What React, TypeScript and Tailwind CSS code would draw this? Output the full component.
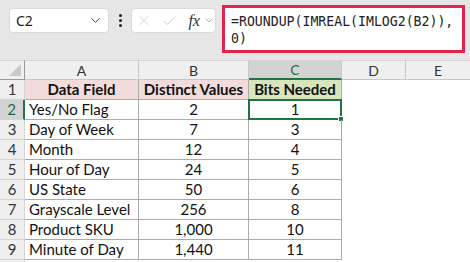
import { ChevronDown, X, Check } from "lucide-react";

const rows: [string, string, string][] = [
  ["Yes/No Flag", "2", "1"],
  ["Day of Week", "7", "3"],
  ["Month", "12", "4"],
  ["Hour of Day", "24", "5"],
  ["US State", "50", "6"],
  ["Grayscale Level", "256", "8"],
  ["Product SKU", "1,000", "10"],
  ["Minute of Day", "1,440", "11"],
];

const cell = "h-[20px] flex items-center border-r border-b border-[#ababab] text-[15px] text-[#111]";
const rowHead = "h-[20px] flex items-center justify-center bg-[#efefef] border-r border-b border-[#d4d4d4] text-[15px] text-[#333]";

export default function App() {
  return (
    <div className="w-[470px] h-[262px] overflow-hidden bg-white" style={{ fontFamily: "Lato, 'Noto Sans', sans-serif" }}>
      {/* formula bar */}
      <div className="h-[60px] bg-[#e6e6e6] flex items-start pl-[9px] pt-[5px]">
        <div className="mt-[3px] w-[100px] h-[25px] rounded-[4px] bg-white border border-[#dadada] flex items-center justify-between pl-[6px] pr-[5px]">
          <span className="text-[14px] text-[#222]" style={{ fontFamily: "'Noto Sans', sans-serif" }}>C2</span>
          <ChevronDown size={15} strokeWidth={1.6} className="text-[#444]" />
        </div>
        <div className="mt-[3px] w-[22px] h-[25px] flex flex-col items-center justify-center gap-[2px]">
          <span className="w-[3px] h-[3px] bg-[#222] rounded-full" />
          <span className="w-[3px] h-[3px] bg-[#222] rounded-full" />
          <span className="w-[3px] h-[3px] bg-[#222] rounded-full" />
        </div>
        <div className="mt-[3px] w-[85px] h-[25px] rounded-[4px] bg-white border border-[#dadada] flex items-center pl-[4px] gap-[3px]">
          <X size={17} strokeWidth={1.2} className="text-[#c4c4c4]" />
          <Check size={18} strokeWidth={1.2} className="text-[#c4c4c4] ml-[6px]" />
          <span className="ml-[8px] text-[16px] italic text-[#333]" style={{ fontFamily: "'Liberation Serif', serif" }}>fx</span>
          <ChevronDown size={13} strokeWidth={1.4} className="text-[#888]" />
        </div>
        <div className="ml-[6px] w-[243px] h-[48px] bg-white border-[3px] border-[#e3234b] pl-[6px] pt-[5px] text-[13.2px] leading-[17px] text-[#222]" style={{ fontFamily: "'DejaVu Sans Mono', monospace" }}>
          <div>=ROUNDUP(IMREAL(IMLOG2(B2)),</div>
          <div>0)</div>
        </div>
      </div>

      {/* sheet */}
      <div className="grid grid-cols-[25px_114px_110px_93px_64px_1fr]">
        {/* column headers */}
        <div className="h-[20px] bg-[#efefef] border-r border-b border-[#9a9a9a] relative border-t border-t-[#d4d4d4]">
          <div className="absolute right-[3px] bottom-[3px] w-0 h-0 border-l-[12px] border-l-transparent border-b-[12px] border-b-[#c8c8c8]" />
        </div>
        <div className="h-[20px] bg-[#efefef] border-r border-b border-[#c8c8c8] border-t border-t-[#d4d4d4] flex items-center justify-center text-[14px] text-[#333]">A</div>
        <div className="h-[20px] bg-[#efefef] border-r border-b border-[#c8c8c8] border-t border-t-[#d4d4d4] flex items-center justify-center text-[14px] text-[#333]">B</div>
        <div className="h-[20px] bg-[#d3d3d3] border-r border-[#c8c8c8] border-b-2 border-b-[#217346] border-t border-t-[#d4d4d4] flex items-center justify-center text-[14px] text-[#1e6e45]">C</div>
        <div className="h-[20px] bg-[#efefef] border-r border-b border-[#c8c8c8] border-t border-t-[#d4d4d4] flex items-center justify-center text-[14px] text-[#333]">D</div>
        <div className="h-[20px] bg-[#efefef] border-b border-[#c8c8c8] border-t border-t-[#d4d4d4] flex items-center justify-center text-[14px] text-[#333] justify-self-start w-[64px]">E</div>

        {/* row 1 */}
        <div className={rowHead}>1</div>
        <div className={`${cell} justify-center font-bold bg-[#f2dcdb]`}>Data Field</div>
        <div className={`${cell} justify-center font-bold bg-[#f2dcdb]`}>Distinct Values</div>
        <div className={`${cell} justify-center font-bold bg-[#d8e4bc]`}>Bits Needed</div>
        <div className="h-[20px]" />
        <div className="h-[20px]" />

        {rows.map(([field, distinct, bits], i) => {
          const n = i + 2;
          const selected = n === 2;
          return [
            <div
              key={`h${n}`}
              className={
                selected
                  ? "h-[20px] flex items-center justify-center bg-[#d3d3d3] border-r-2 border-r-[#217346] border-b border-b-[#d4d4d4] text-[15px] text-[#1e6e45]"
                  : rowHead
              }
            >
              {n}
            </div>,
            <div key={`a${n}`} className={`${cell} pl-[4px]`}>{field}</div>,
            <div key={`b${n}`} className={`${cell} justify-center`}>{distinct}</div>,
            <div key={`c${n}`} className={`${cell} justify-center relative`}>
              {bits}
              {selected && (
                <div className="absolute -left-[1px] -top-[1px] -right-[1px] -bottom-[1px] border-2 border-[#217346]">
                  <div className="absolute -right-[4px] -bottom-[4px] w-[6px] h-[6px] bg-[#217346] border border-white" />
                </div>
              )}
            </div>,
            <div key={`d${n}`} className="h-[20px]" />,
            <div key={`e${n}`} className="h-[20px]" />,
          ];
        })}
        <div className="h-[20px] bg-[#efefef] border-r border-[#d4d4d4]" />
      </div>
    </div>
  );
}
